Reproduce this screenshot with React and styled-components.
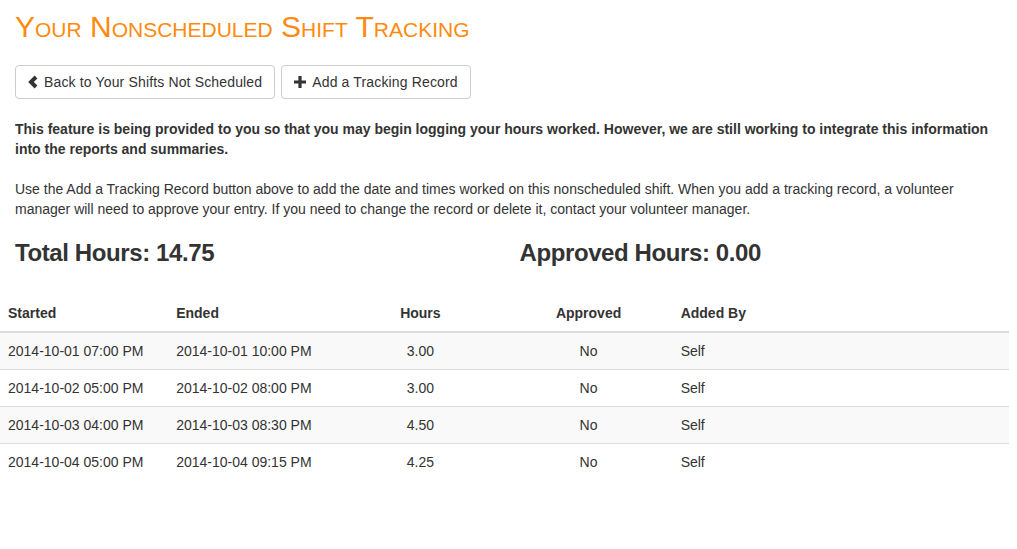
import React from "react";
import styled, { createGlobalStyle } from "styled-components";

const GlobalStyle = createGlobalStyle`
	* {
		box-sizing: border-box;
	}
	body {
		margin: 0;
		background: #fff;
		color: #333;
		font-family: "Liberation Sans", Arial, sans-serif;
		font-size: 14px;
		line-height: 20px;
	}
`;

const Page = styled.div`
	width: 1009px;
`;

const Container = styled.div`
	padding: 0 15px;
`;

const Title = styled.h2`
	margin: 10px 0 22px;
	font-size: 30px;
	line-height: 33px;
	font-weight: 400;
	font-variant: small-caps;
	color: #ff8a0d;
`;

const Toolbar = styled.div`
	display: flex;
	gap: 6px;
	margin-bottom: 20px;
`;

const Button = styled.button`
	display: inline-flex;
	align-items: center;
	gap: 6px;
	height: 34px;
	padding: 6px 12px;
	font-family: inherit;
	font-size: 14px;
	line-height: 20px;
	letter-spacing: 0.15px;
	color: #333;
	background: #fff;
	border: 1px solid #ccc;
	border-radius: 4px;
	cursor: pointer;
	svg {
		display: block;
		fill: #333;
	}
`;

const Paragraph = styled.p`
	margin: 0 0 20px;
	font-weight: ${(p) => (p.$bold ? 700 : 400)};
`;

const Totals = styled.div`
	display: grid;
	grid-template-columns: 1fr 1fr;
	margin: 0 -15px;
	padding-top: 1px;
	h3 {
		margin: 0;
		padding: 0 15px;
		font-size: 24px;
		line-height: 26px;
		font-weight: 700;
		letter-spacing: -0.4px;
	}
`;

const Table = styled.table`
	width: 100%;
	margin-top: 29px;
	border-collapse: collapse;
	border-spacing: 0;
	table-layout: fixed;
	th,
	td {
		padding: 8px;
		line-height: 20px;
		text-align: left;
	}
	th {
		font-weight: 700;
		border-bottom: 2px solid #ddd;
	}
	td {
		border-top: 1px solid #ddd;
	}
	tbody tr:first-child td {
		border-top: 0;
	}
	tbody tr:nth-child(odd) {
		background: #f9f9f9;
	}
	.center {
		text-align: center;
	}
`;

const ChevronLeft = () => (
	<svg width="10" height="14" viewBox="0 0 10 14">
		<path d="M6.6 0.6 L9.4 3.4 L5.8 7 L9.4 10.6 L6.6 13.4 L0.2 7 Z" />
	</svg>
);

const Plus = () => (
	<svg width="12" height="12" viewBox="0 0 12 12">
		<path d="M4.4 0 H7.6 V4.4 H12 V7.6 H7.6 V12 H4.4 V7.6 H0 V4.4 H4.4 Z" />
	</svg>
);

const records = [
	{ started: "2014-10-01 07:00 PM", ended: "2014-10-01 10:00 PM", hours: "3.00" },
	{ started: "2014-10-02 05:00 PM", ended: "2014-10-02 08:00 PM", hours: "3.00" },
	{ started: "2014-10-03 04:00 PM", ended: "2014-10-03 08:30 PM", hours: "4.50" },
	{ started: "2014-10-04 05:00 PM", ended: "2014-10-04 09:15 PM", hours: "4.25" },
];

const App = () => {
	return (
		<Page>
			<GlobalStyle />
			<Container>
				<Title>Your Nonscheduled Shift Tracking</Title>
				<Toolbar>
					<Button type="button">
						<ChevronLeft />
						Back to Your Shifts Not Scheduled
					</Button>
					<Button type="button">
						<Plus />
						Add a Tracking Record
					</Button>
				</Toolbar>
				<Paragraph $bold>
					This feature is being provided to you so that you may begin logging your hours worked. However, we are still working to integrate this
					information into the reports and summaries.
				</Paragraph>
				<Paragraph>
					Use the Add a Tracking Record button above to add the date and times worked on this nonscheduled shift. When you add a tracking record, a
					volunteer manager will need to approve your entry. If you need to change the record or delete it, contact your volunteer manager.
				</Paragraph>
				<Totals>
					<h3>Total Hours: 14.75</h3>
					<h3>Approved Hours: 0.00</h3>
				</Totals>
			</Container>
			<Table>
				<colgroup>
					<col style={{ width: "16.666%" }} />
					<col style={{ width: "16.666%" }} />
					<col style={{ width: "16.666%" }} />
					<col style={{ width: "16.666%" }} />
					<col style={{ width: "33.333%" }} />
				</colgroup>
				<thead>
					<tr>
						<th>Started</th>
						<th>Ended</th>
						<th className="center">Hours</th>
						<th className="center">Approved</th>
						<th>Added By</th>
					</tr>
				</thead>
				<tbody>
					{records.map((r) => (
						<tr key={r.started}>
							<td>{r.started}</td>
							<td>{r.ended}</td>
							<td className="center">{r.hours}</td>
							<td className="center">No</td>
							<td>Self</td>
						</tr>
					))}
				</tbody>
			</Table>
		</Page>
	);
};

export default App;
